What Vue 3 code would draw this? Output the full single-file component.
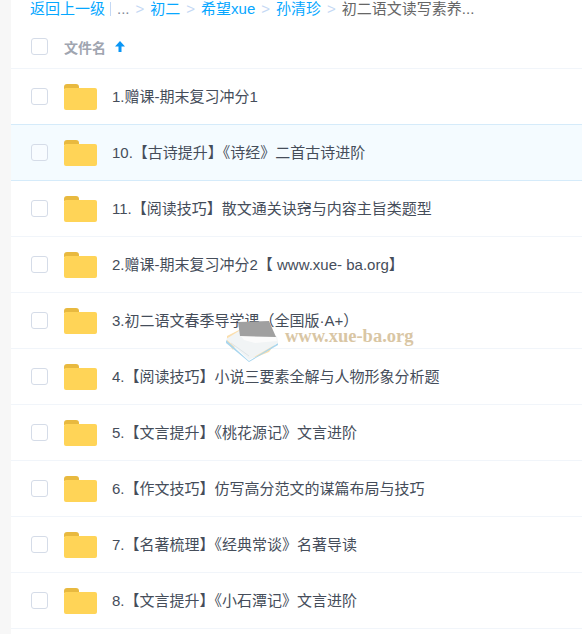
<script setup>
const rows = [
  '1.赠课-期末复习冲分1',
  '10.【古诗提升】《诗经》二首古诗进阶',
  '11.【阅读技巧】散文通关诀窍与内容主旨类题型',
  '2.赠课-期末复习冲分2【 www.xue- ba.org】',
  '3.初二语文春季导学课（全国版·A+）',
  '4.【阅读技巧】小说三要素全解与人物形象分析题',
  '5.【文言提升】《桃花源记》文言进阶',
  '6.【作文技巧】仿写高分范文的谋篇布局与技巧',
  '7.【名著梳理】《经典常谈》名著导读',
  '8.【文言提升】《小石潭记》文言进阶',
]
</script>

<template>
  <div class="page">
    <div class="panel">
      <nav class="crumbs">
        <a class="back">返回上一级</a><i class="bar"></i><span class="dots">...</span>
        <span class="sep">&gt;</span><a>初二</a>
        <span class="sep">&gt;</span><a>希望xue</a>
        <span class="sep">&gt;</span><a>孙清珍</a>
        <span class="sep">&gt;</span><span class="current">初二语文读写素养...</span>
      </nav>
      <div class="head">
        <span class="check"></span>
        <span class="title">文件名</span>
        <svg class="arrow" width="10" height="11" viewBox="0 0 10 11"><path d="M5 0 L10 5.5 H6.5 V11 H3.5 V5.5 H0 Z" fill="#0a96f5"/></svg>
      </div>
      <div v-for="(name, i) in rows" :key="name" class="row" :class="{ active: i === 1 }">
        <span class="check"></span>
        <svg class="folder" width="33" height="26" viewBox="0 0 33 26">
          <path d="M0 3a3 3 0 0 1 3-3h9a3 3 0 0 1 3 3v2H0Z" fill="#e8b93f"/>
          <rect x="0" y="4" width="33" height="22" rx="2" fill="#ffd457"/>
        </svg>
        <span class="name">{{ name }}</span>
      </div>
    </div>
    <div class="mark">
      <svg class="mark-icon" width="56" height="46" viewBox="0 0 56 46">
        <path d="M2 20 L14 14 L14 24 L8 34 L2 26 Z" fill="#fbdfae"/>
        <path d="M26 42 L44 31 L50 28 L44 36 L34 40 Z" fill="#fbdfae"/>
        <path d="M1 24 L24 45 L53 27 L53 29 L24 46 L1 27 Z" fill="#a9d6ee"/>
        <path d="M1 23 L14 15 L52 20 L53 27 L24 44 Z" fill="#f1f4f5"/>
        <path d="M6 27 L24 40" stroke="#dfe5e8" stroke-width="1" fill="none"/>
        <path d="M15 19 L51 21 L52 25 L30 27 L19 24 Z" fill="#fbfbfb"/>
        <path d="M13 6 L44 5 L51 21 L15 20 Z" fill="#a0a0a0"/>
      </svg>
      <span class="mark-text">www.xue-ba.org</span>
    </div>
  </div>
</template>

<style scoped>
.page {
  position: relative;
  width: 582px;
  height: 634px;
  overflow: hidden;
  background: #f7f7f7;
  font-family: "Liberation Sans", "Noto Sans CJK SC", sans-serif;
}
.panel {
  margin-left: 11px;
  height: 634px;
  background: #fff;
}
.crumbs {
  height: 17px;
  padding-left: 19px;
  display: flex;
  align-items: center;
  font-size: 15px;
  line-height: 17px;
  white-space: nowrap;
  color: #06a7ff;
}
.crumbs a { color: #06a7ff; }
.bar {
  width: 1px;
  height: 14px;
  background: #c4d8f4;
  margin: 0 6px 0 5px;
}
.dots { color: #818999; }
.sep {
  color: #c4d8f4;
  margin: 0 6px;
}
.current { color: #666; }
.head {
  padding: 8px 0 0 20px;
  box-sizing: border-box;
  height: 52px;
  display: flex;
  align-items: center;
  border-bottom: 1px solid #f1f5fa;
}
.check {
  flex: none;
  width: 17px;
  height: 17px;
  box-sizing: border-box;
  border: 1px solid #d5dce8;
  border-radius: 3px;
  background: #fff;
}
.title {
  margin-left: 16px;
  font-size: 14px;
  font-weight: 700;
  color: #a0a5b0;
}
.arrow { margin-left: 9px; }
.row {
  height: 56px;
  box-sizing: border-box;
  padding-left: 20px;
  display: flex;
  align-items: center;
  border-bottom: 1px solid #f1f5fa;
}
.row.active {
  background: #f4fbff;
  border-bottom-color: #d5ebfa;
  box-shadow: 0 -1px 0 #d5ebfa;
}
.row.active .check { background: #f8fcff; }
.folder { margin-left: 16px; flex: none; }
.name {
  margin-left: 15px;
  font-size: 15px;
  line-height: 20px;
  color: #454d5a;
  white-space: nowrap;
}
.mark {
  position: absolute;
  left: 225px;
  top: 316px;
  display: flex;
  align-items: center;
  pointer-events: none;
}
.mark-text {
  margin: -6px 0 0 4px;
  font-family: "Liberation Serif", serif;
  font-size: 18.5px;
  font-weight: 700;
  color: #d9c6a4;
  white-space: nowrap;
}
</style>
